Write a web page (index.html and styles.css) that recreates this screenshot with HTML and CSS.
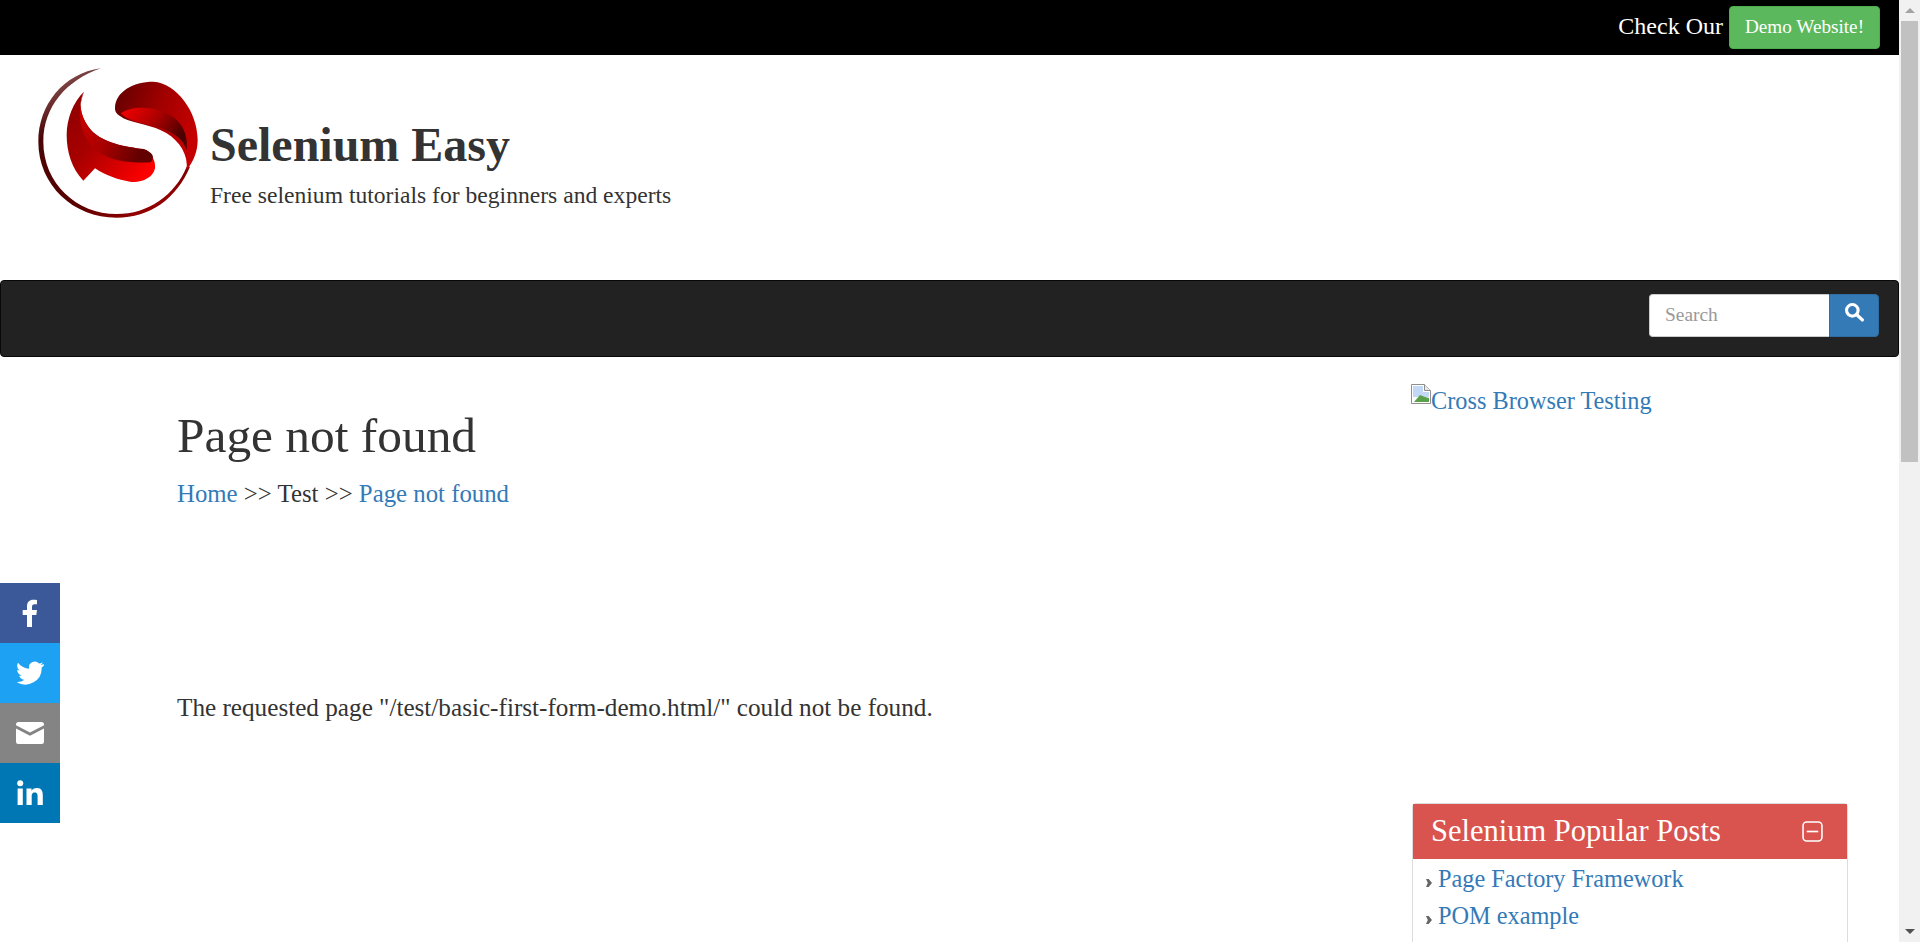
FILE: index.html
```html
<!DOCTYPE html>
<html lang="en">
<head>
<meta charset="utf-8">
<title>Page not found | Selenium Easy</title>
<link rel="stylesheet" href="styles.css">
</head>
<body>
<div class="page">
  <div class="topbar">
    <span class="topbar-text">Check Our</span>
    <a class="demo-btn" href="#">Demo Website!</a>
  </div>
  <header class="site-header">
    <svg class="logo" viewBox="0 0 570 540" width="190" height="180" aria-hidden="true">
      <defs>
        <linearGradient id="ring" x1="0" y1="0" x2="0.6" y2="1">
          <stop offset="0" stop-color="#a07070"/>
          <stop offset="0.35" stop-color="#4a0505"/>
          <stop offset="0.8" stop-color="#5a0000"/>
          <stop offset="1" stop-color="#900000"/>
        </linearGradient>
        <linearGradient id="upper" x1="0" y1="0" x2="1" y2="0.4">
          <stop offset="0" stop-color="#5e0000"/>
          <stop offset="0.55" stop-color="#a00000"/>
          <stop offset="1" stop-color="#c40000"/>
        </linearGradient>
        <linearGradient id="upper2" x1="0" y1="0" x2="1" y2="0.5">
          <stop offset="0" stop-color="#f80000"/>
          <stop offset="0.5" stop-color="#b00000"/>
          <stop offset="1" stop-color="#4a0000"/>
        </linearGradient>
        <linearGradient id="lower" x1="0" y1="0" x2="1" y2="0.8">
          <stop offset="0" stop-color="#8a0000"/>
          <stop offset="0.45" stop-color="#a80000"/>
          <stop offset="1" stop-color="#ff0000"/>
        </linearGradient>
        <linearGradient id="lower2" x1="0" y1="0" x2="1" y2="0.3">
          <stop offset="0" stop-color="#d00000"/>
          <stop offset="0.5" stop-color="#a80000"/>
          <stop offset="1" stop-color="#620000"/>
        </linearGradient>
      </defs>
      <path d="M243 40C130 55 55 150 55 260C55 390 160 488 290 488C390 488 470 430 510 335L500 335C465 420 385 477 290 477C170 477 70 385 70 260C70 155 140 75 243 40Z" fill="url(#ring)"/>
      <path d="M285 160C285 110 340 80 400 80C470 85 533 170 533 255C533 290 520 320 500 345C505 300 480 260 440 235C400 210 340 205 310 190C295 180 285 175 285 160Z" fill="url(#upper)"/>
      <path d="M303 175C335 150 420 150 470 195C495 220 503 250 500 285C490 255 465 235 430 222C390 207 330 205 303 175Z" fill="url(#upper2)"/>
      <path d="M192 110C175 140 180 180 205 215C240 265 320 275 370 282C395 290 408 320 405 340C400 370 360 385 330 380C295 375 255 360 225 340L190 377C155 340 140 290 140 240C140 190 160 140 192 110Z" fill="url(#lower)"/>
      <path d="M192 110C175 140 180 180 205 215C240 265 320 275 370 282C395 290 408 305 392 322C340 325 280 320 240 295C205 270 180 230 180 180C180 150 185 130 192 110Z" fill="url(#lower2)"/>
    </svg>
    <div class="brand">
      <h1 class="brand-title">Selenium Easy</h1>
      <p class="brand-tag">Free selenium tutorials for beginners and experts</p>
    </div>
  </header>
  <nav class="navbar">
    <form class="search">
      <input class="search-input" type="text" placeholder="Search">
      <button class="search-btn" type="button" aria-label="Search">
        <svg viewBox="0 0 18 18" width="20" height="20"><circle cx="7.5" cy="7.5" r="5.2" fill="none" stroke="#fff" stroke-width="2.8"/><path d="M11.5 11.5l5 4.6" stroke="#fff" stroke-width="3" stroke-linecap="round"/></svg>
      </button>
    </form>
  </nav>
  <div class="content">
    <main class="main">
      <h2 class="page-title">Page not found</h2>
      <div class="crumbs"><a href="#">Home</a> &gt;&gt; Test &gt;&gt; <a href="#">Page not found</a></div>
      <p class="message">The requested page "/test/basic-first-form-demo.html/" could not be found.</p>
    </main>
    <aside class="sidebar">
      <a class="ad" href="#"><svg class="broken" viewBox="0 0 20 20" width="20" height="20"><path d="M.5.5h13l6 6v13H.5z" fill="#fff" stroke="#8f8f8f"/><path d="M13.500.5v6h6" fill="#e8e8e8" stroke="#8f8f8f"/><path d="M2 2h10v6h6v5H2z" fill="#c3d8f5"/><path d="M3 18l6-7 5 2 4 1v4z" fill="#5aa04a"/></svg>Cross Browser Testing</a>
      <section class="panel">
        <div class="panel-head">
          <h3 class="panel-title">Selenium Popular Posts</h3>
          <svg viewBox="0 0 20 20" width="21" height="21"><rect x="1" y="1" width="18" height="18" rx="3.5" fill="none" stroke="#fff" stroke-width="1.5"/><path d="M4.5 10h11" stroke="#fff" stroke-width="1.6"/></svg>
        </div>
        <ul class="panel-list">
          <li><a href="#">Page Factory Framework</a></li>
          <li><a href="#">POM example</a></li>
        </ul>
      </section>
    </aside>
  </div>
</div>
<div class="social">
  <a class="soc soc-fb" href="#"><svg viewBox="2 0 18 29" width="18" height="29"><path d="M13 28V16h4.300l.7-5h-5V8c0-1.600.6-2.700 2.800-2.700H18V1c-.6-.1-2-.2-3.800-.2C10.500.8 8 3 8 7.200V11H3.700v5H8v12z" fill="#fff"/></svg></a>
  <a class="soc soc-tw" href="#"><svg viewBox="0 0 24 24" width="28" height="28"><path d="M23.500 4.600c-.9.400-1.800.7-2.800.8 1-.6 1.800-1.600 2.100-2.700-.9.600-2 1-3.100 1.200a4.900 4.900 0 0 0-8.400 4.500C7.700 8.200 4.100 6.200 1.700 3.200c-1.300 2.200-.7 5.100 1.500 6.600-.8 0-1.600-.2-2.200-.6 0 2.400 1.700 4.500 3.900 5-.7.200-1.500.2-2.200.1.600 2 2.400 3.400 4.600 3.400A9.900 9.900 0 0 1 .5 19.700 14 14 0 0 0 22 7.300c1-.7 1.800-1.600 2.400-2.600z" fill="#fff"/></svg></a>
  <a class="soc soc-mail" href="#"><svg viewBox="0 0 28 24" width="28" height="24"><path d="M2.500 1h23A2.500 2.500 0 0 1 28 3.500v.7L14 11.500 0 4.200v-.7A2.500 2.500 0 0 1 2.500 1zM0 7.500l14 7.200 14-7.200v13A2.500 2.500 0 0 1 25.500 23h-23A2.500 2.500 0 0 1 0 20.500z" fill="#fff"/></svg></a>
  <a class="soc soc-li" href="#"><svg viewBox="0 0 26 26" width="26" height="26"><circle cx="3.200" cy="3.200" r="3" fill="#fff"/><path d="M.6 8.500h5.200V25H.6zM9.500 8.500h5v2.300c.8-1.400 2.700-2.700 5.300-2.700 5 0 6 3.200 6 7.500V25h-5.200v-8.200c0-2-.1-4.300-2.800-4.300s-3.100 2-3.100 4.200V25H9.500z" fill="#fff"/></svg></a>
</div>
<div class="scrollbar">
  <div class="sb-arrow sb-up"></div>
  <div class="sb-track"><div class="sb-thumb"></div></div>
  <div class="sb-arrow sb-down"></div>
</div>
</body>
</html>
```
FILE: styles.css
```css
* { box-sizing: border-box; }
html, body { margin: 0; height: 942px; overflow: hidden; }
body {
  display: flex;
  font-family: "Liberation Serif", "DejaVu Serif", serif;
  font-size: 22px;
  color: #333;
  background: #fff;
}
a { color: #337ab7; text-decoration: none; }
.page { width: 1899px; flex: none; height: 942px; overflow: hidden; }
.topbar {
  height: 55px;
  background: #000;
  display: flex;
  justify-content: flex-end;
  align-items: center;
  padding-right: 19px;
  gap: 6px;
}
.topbar-text { color: #fff; font-size: 24px; margin-bottom: 2px; }
.demo-btn {
  background: #5cb85c;
  border: 1px solid #4cae4c;
  border-radius: 4px;
  color: #fff;
  font-size: 19.2px;
  height: 43px;
  width: 151px;
  padding-bottom: 2px;
  display: flex;
  align-items: center;
  justify-content: center;
}
.site-header {
  height: 225px;
  display: flex;
  padding: 0 0 0 20px;
}
.logo { flex: none; }
.brand { padding-top: 65px; }
.brand-title {
  margin: 0;
  font-size: 48px;
  line-height: 50px;
  font-weight: 700;
  color: #333;
}
.brand-tag { margin: 12px 0 0; font-size: 23.6px; line-height: 26px; color: #333; }
.navbar {
  height: 77px;
  background: #222;
  border: 1px solid #080808;
  border-radius: 4px;
  display: flex;
  justify-content: flex-end;
  align-items: center;
  padding: 0 19px 7px 0;
}
.search { display: flex; height: 43px; }
.search-input {
  width: 180px;
  border: 1px solid #ccc;
  border-right: 0;
  border-radius: 4px 0 0 4px;
  padding: 0 15px;
  font: 19.4px "Liberation Serif", serif;
  background: #fff;
}
.search-input::placeholder { color: #999; opacity: 1; }
.search-btn {
  width: 50px;
  background: #337ab7;
  border: 1px solid #2e6da4;
  border-radius: 0 4px 4px 0;
  padding: 0 0 4px;
}
.content { display: flex; height: 585px; }
.main { width: 1411px; flex: none; padding: 53px 0 0 177px; }
.page-title { margin: 0; font-size: 49.4px; line-height: 52px; font-weight: 400; color: #333; }
.crumbs { margin-top: 17px; font-size: 24.8px; line-height: 30px; color: #333; }
.message { margin: 184px 0 0; font-size: 25.2px; line-height: 30px; color: #333; }
.sidebar { width: 488px; flex: none; }
.ad { display: block; margin-top: 27px; height: 419px; font-size: 24.3px; line-height: 34px; }
.broken { vertical-align: top; }
.panel { width: 436px; margin-left: 1px; border: 1px solid #ddd; border-radius: 4px 4px 0 0; }
.panel-head {
  height: 55px;
  background: #d9534f;
  display: flex;
  align-items: center;
  justify-content: space-between;
  padding: 0 24px 0 18px;
}
.panel-title { margin: 0; font-size: 30.5px; font-weight: 400; color: #fff; }
.panel-list { list-style: none; margin: 0; padding: 1px 0 200px 25px; }
.panel-list li { display: flex; align-items: center; line-height: 37px; font-size: 24.3px; }
.panel-list li::before {
  content: "";
  flex: none;
  width: 6px;
  height: 8px;
  margin: 9px 6px 0 -12px;
  background: #666;
  clip-path: polygon(0 0, 45% 0, 100% 50%, 45% 100%, 0 100%, 30% 50%);
}
.social { position: fixed; left: 0; top: 583px; width: 60px; }
.soc { display: flex; width: 60px; height: 60px; align-items: center; justify-content: center; }
.soc-fb { background: #3b5998; }
.soc-tw { background: #1da1f2; }
.soc-mail { background: #848484; }
.soc-li { background: #0077b5; }
.scrollbar { width: 21px; flex: none; height: 942px; background: #f1f1f1; display: flex; flex-direction: column; }
.sb-arrow { height: 21px; flex: none; display: flex; align-items: center; justify-content: center; }
.sb-up::after, .sb-down::after {
  content: "";
  border-left: 5px solid transparent;
  border-right: 5px solid transparent;
}
.sb-up::after { border-bottom: 5px solid #a3a3a3; }
.sb-down::after { border-top: 5px solid #505050; }
.sb-track { flex: 1; padding: 0 2px; }
.sb-thumb { width: 17px; height: 441px; background: #c1c1c1; }
```
